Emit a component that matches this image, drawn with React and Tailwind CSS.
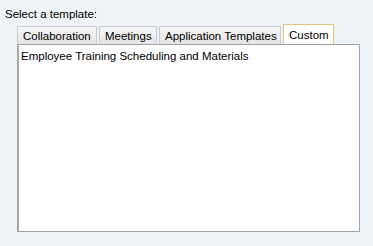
export default function App() {
  return (
    <div className="w-[373px] h-[246px] bg-[#eef3f7] relative whitespace-nowrap" style={{ fontFamily: '"Liberation Sans", Arial, sans-serif' }}>
      <div className="pt-[7px] pl-[5px] text-[11.5px] leading-[14px] text-black">Select a template:</div>
      <div className="ml-[17px] mt-[3px] w-[343px]">
        <div className="flex items-end h-[20px] gap-[2px]">
          <div className="h-[18px] w-[80px] border border-b-0 border-[#c9ccd0] bg-gradient-to-b from-[#f6f6f6] to-[#e4e4e4] text-[11.5px] leading-[18px] pl-[5px]">Collaboration</div>
          <div className="h-[18px] w-[58px] border border-b-0 border-[#c9ccd0] bg-gradient-to-b from-[#f6f6f6] to-[#e4e4e4] text-[11.5px] leading-[18px] pl-[5px]">Meetings</div>
          <div className="h-[18px] w-[122px] border border-b-0 border-[#c9ccd0] bg-gradient-to-b from-[#f6f6f6] to-[#e4e4e4] text-[11.5px] leading-[18px] pl-[5px]">Application Templates</div>
          <div className="h-[20px] w-[51px] border border-b-0 border-[#e6c47e] bg-white text-[11.5px] leading-[20px] pl-[5px]">Custom</div>
        </div>
        <div className="h-[188px] bg-white border border-[#9da3ab] border-l-[2px] border-l-[#a8a8a8]">
          <div className="pl-[2px] pt-[4px] text-[11.5px] leading-[14px]">Employee Training Scheduling and Materials</div>
        </div>
      </div>
    </div>
  );
}
